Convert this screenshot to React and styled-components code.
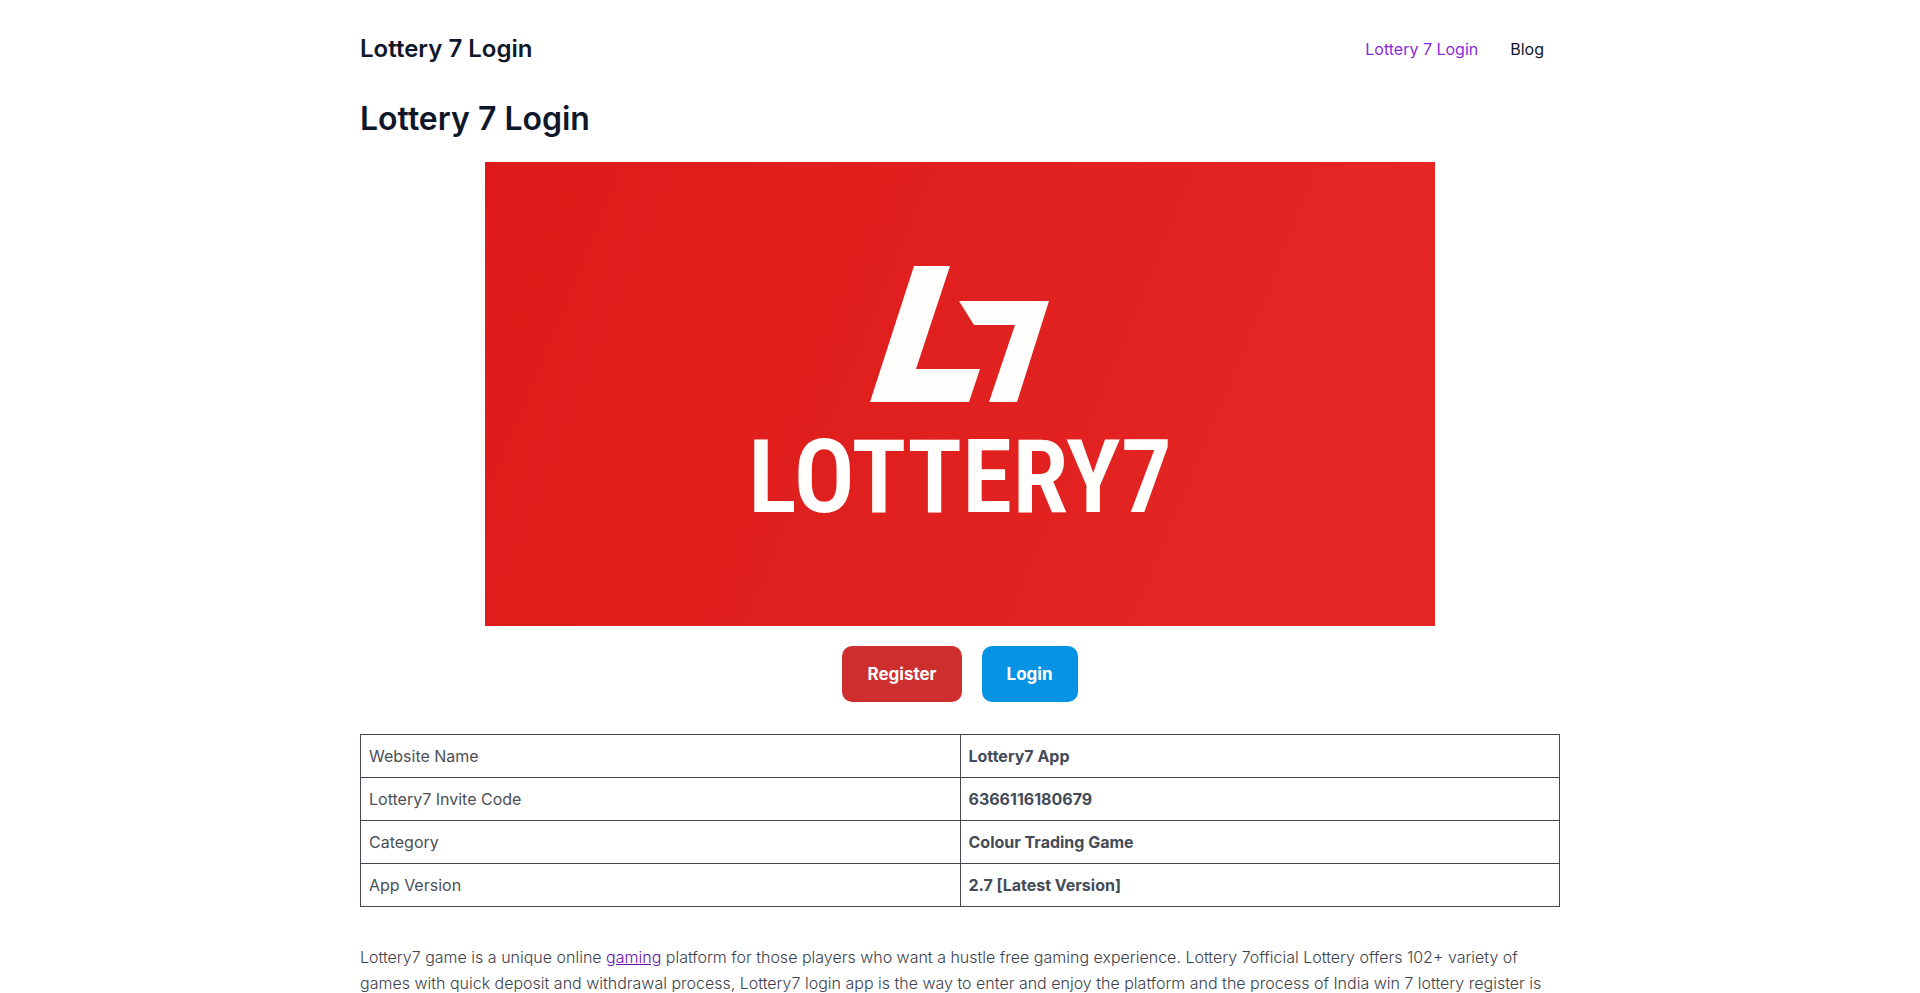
import React from "react";
import styled, { createGlobalStyle } from "styled-components";

const GlobalStyle = createGlobalStyle`
  * {
    box-sizing: border-box;
  }
  body {
    margin: 0;
    background: #fff;
    color: #4b4f58;
    font-family: Inter, "Liberation Sans", sans-serif;
    font-size: 16px;
    line-height: 26px;
  }
`;

const Container = styled.div`
  max-width: 1240px;
  margin: 0 auto;
  padding: 0 20px;
`;

const Header = styled.header`
  display: flex;
  align-items: center;
  justify-content: space-between;
  height: 98px;
`;

const SiteTitle = styled.a`
  color: #0f172a;
  font-size: 24px;
  font-weight: 600;
  text-decoration: none;
`;

const Nav = styled.nav`
  display: flex;
`;

const NavLink = styled.a`
  padding: 0 16px;
  color: ${({ $active }) => ($active ? "#862bd9" : "#0f172a")};
  text-decoration: none;
`;

const Title = styled.h1`
  margin: 0 0 22px;
  color: #0f172a;
  font-size: 32px;
  font-weight: 600;
  line-height: 42px;
`;

const Banner = styled.svg`
  display: block;
  width: 100%;
  max-width: 950px;
  margin: 0 auto 20px;
`;

const Wordmark = styled.text`
  fill: #fffefc;
  font-family: "Roboto Condensed", "Liberation Sans Narrow", Roboto, sans-serif;
  font-size: 102px;
  font-weight: 600;
`;

const Buttons = styled.div`
  display: flex;
  justify-content: center;
  gap: 20px;
  margin-bottom: 32px;
`;

const Button = styled.button`
  height: 56px;
  padding: 0 25px;
  border: none;
  border-radius: 10px;
  background: ${({ $color }) => $color};
  color: #fff;
  font-family: inherit;
  font-size: 17px;
  font-weight: 700;
  cursor: pointer;
`;

const Table = styled.table`
  width: 100%;
  margin-bottom: 37px;
  border-collapse: collapse;
  table-layout: fixed;
`;

const Cell = styled.td`
  padding: 8px;
  border: 1px solid #454854;
`;

const Strong = styled.strong`
  color: #434b58;
`;

const Text = styled.p`
  margin: 0;
  color: #3d424c;
  font-weight: 300;
`;

const TextLink = styled.a`
  color: #6a0dad;
`;

const details = [
  ["Website Name", "Lottery7 App"],
  ["Lottery7 Invite Code", "6366116180679"],
  ["Category", "Colour Trading Game"],
  ["App Version", "2.7 [Latest Version]"],
];

function Logo() {
  return (
    <Banner viewBox="0 0 950 464" role="img" aria-label="Lottery7">
      <defs>
        <linearGradient id="red" x1="0" y1="0" x2="1" y2="0.2">
          <stop offset="0" stopColor="#de1b1a" />
          <stop offset="0.5" stopColor="#e0201e" />
          <stop offset="1" stopColor="#e42624" />
        </linearGradient>
      </defs>
      <rect width="950" height="464" fill="url(#red)" />
      <g fill="#fffefc">
        <path d="M429 104H465L431 207H495L484 240H385Z" />
        <path d="M474 139H564L532 240H504L530 163H489Z" />
      </g>
      <Wordmark x="475" y="350" textAnchor="middle">
        LOTTERY7
      </Wordmark>
    </Banner>
  );
}

function App() {
  return (
    <>
      <GlobalStyle />
      <Container>
        <Header>
          <SiteTitle href="#">Lottery 7 Login</SiteTitle>
          <Nav>
            <NavLink href="#" $active>
              Lottery 7 Login
            </NavLink>
            <NavLink href="#blog">Blog</NavLink>
          </Nav>
        </Header>
        <main>
          <Title>Lottery 7 Login</Title>
          <Logo />
          <Buttons>
            <Button $color="#cf2e2e">Register</Button>
            <Button $color="#0693e3">Login</Button>
          </Buttons>
          <Table>
            <tbody>
              {details.map(([label, value]) => (
                <tr key={label}>
                  <Cell>{label}</Cell>
                  <Cell>
                    <Strong>{value}</Strong>
                  </Cell>
                </tr>
              ))}
            </tbody>
          </Table>
          <Text>
            Lottery7 game is a unique online <TextLink href="#gaming">gaming</TextLink> platform for
            those players who want a hustle free gaming experience. Lottery 7official Lottery offers
            102+ variety of
            <br />
            games with quick deposit and withdrawal process, Lottery7 login app is the way to enter
            and enjoy the platform and the process of India win 7 lottery register is
          </Text>
        </main>
      </Container>
    </>
  );
}

export default App;
